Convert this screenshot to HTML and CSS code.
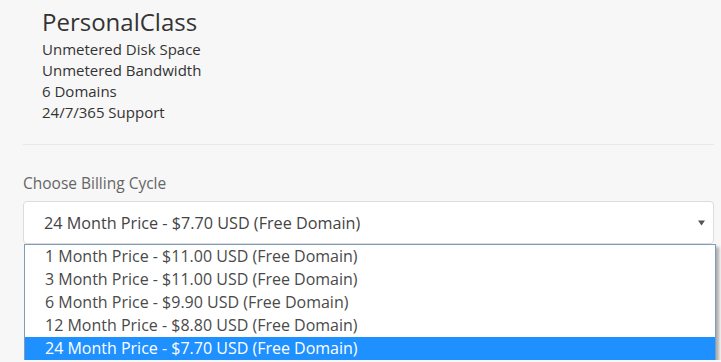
FILE: index.html
```html
<!DOCTYPE html>
<html>

<head>
  <meta charset="utf-8">
  <title>Choose Billing Cycle</title>
  <link rel="stylesheet" href="styles.css">
</head>

<body>
  <div class="page">
    <div class="plan">
      <h1>PersonalClass</h1>
      <ul class="features">
        <li>Unmetered Disk Space</li>
        <li>Unmetered Bandwidth</li>
        <li>6 Domains</li>
        <li>24/7/365 Support</li>
      </ul>
    </div>

    <hr class="divider">

    <div class="label">Choose Billing Cycle</div>
    <div class="field">
      <div class="select">
        <span>24 Month Price - $7.70 USD (Free Domain)</span>
        <svg class="arrow" width="7" height="6" viewBox="0 0 7 6">
          <path d="M0 0.5 L7 0.5 L3.5 5.5 Z" fill="#555"></path>
        </svg>
      </div>
      <div class="options">
        <div class="option">1 Month Price - $11.00 USD (Free Domain)</div>
        <div class="option">3 Month Price - $11.00 USD (Free Domain)</div>
        <div class="option">6 Month Price - $9.90 USD (Free Domain)</div>
        <div class="option">12 Month Price - $8.80 USD (Free Domain)</div>
        <div class="option selected">24 Month Price - $7.70 USD (Free Domain)</div>
      </div>
    </div>
  </div>
</body>

</html>
```

FILE: styles.css
```css
body {
  margin: 0;
  background-color: #f7f7f7;
  font-family: 'Open Sans', 'Liberation Sans', sans-serif;
  color: #333;
}

.page {
  padding: 0 7px 0 23px;
}

/*///////////////////////////////////////////////////////////////////////////*/
.plan {
  padding: 8px 0 0 19px;
}

h1 {
  margin: 0;
  font-size: 24px;
  font-weight: normal;
  line-height: 28px;
  color: #333;
}

.features {
  margin: 3px 0 0 0;
  padding: 0;
  list-style: none;
  font-size: 15px;
  line-height: 21px;
}

.divider {
  margin: 21px 0 0 0;
  border: none;
  border-top: 1px solid #e8e8e8;
}

/*///////////////////////////////////////////////////////////////////////////*/
.label {
  margin-top: 28px;
  font-size: 15.5px;
  line-height: 21px;
  color: #666;
}

.field {
  margin-top: 7px;
}

.select {
  display: flex;
  align-items: center;
  justify-content: space-between;
  box-sizing: border-box;
  height: 43px;
  padding: 0 8px 0 20px;
  border: 1px solid #dcdcdc;
  border-radius: 4px;
  background-color: #fff;
  font-size: 16.2px;
  color: #444;
}

.options {
  margin: 0 -2px 0 1px;
  border: 1px solid #7f9db9;
  border-bottom: none;
  background-color: #fff;
  box-shadow: 3px 3px 3px rgba(0, 0, 0, 0.3);
  font-size: 16px;
  color: #4a4a4a;
}

.option {
  height: 23px;
  padding-left: 20px;
  line-height: 23px;
  white-space: nowrap;
}

.selected {
  background-color: #1e90ff;
  color: #fff;
}
```
